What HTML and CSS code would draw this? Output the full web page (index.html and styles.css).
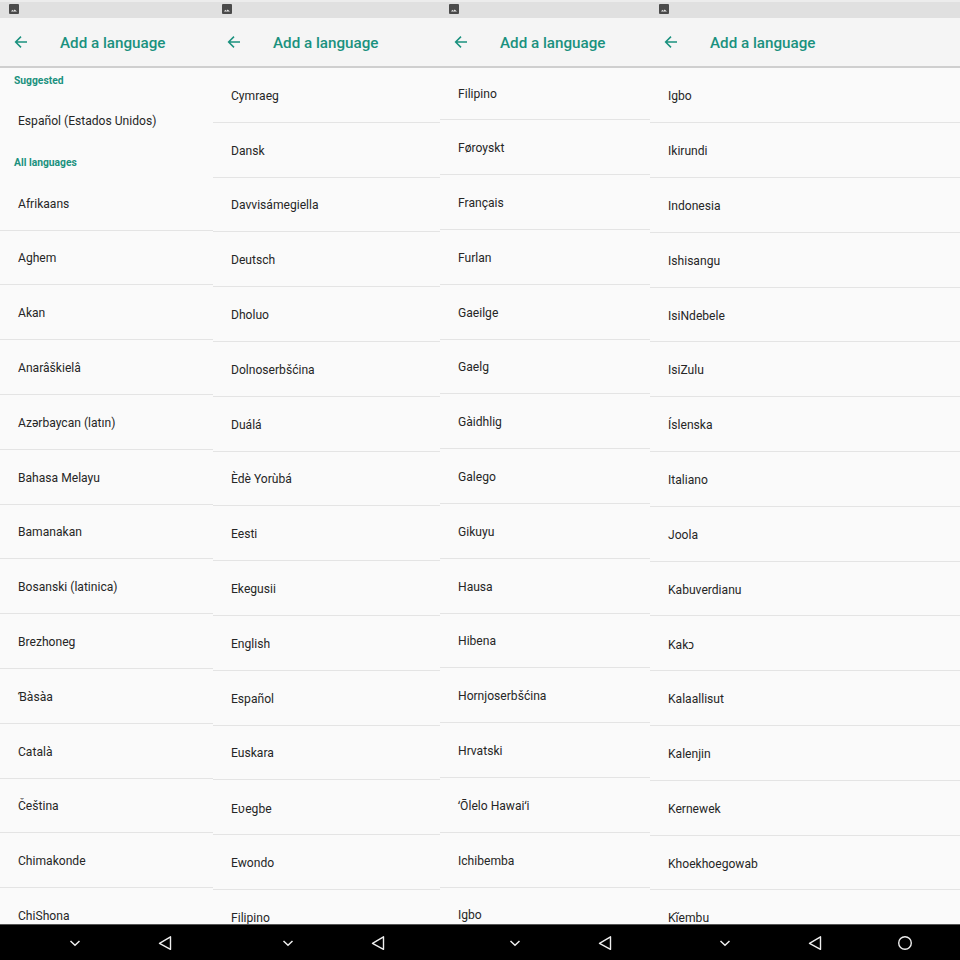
FILE: index.html
```html
<!DOCTYPE html>
<html lang="en">
<head>
<meta charset="utf-8">
<title>Add a language</title>
<link rel="stylesheet" href="styles.css">
</head>
<body>
<svg class="defs" width="0" height="0" aria-hidden="true">
  <symbol id="back" viewBox="0 0 14 14"><path d="M13 7H1.800M7 1.600 1.600 7 7 12.400" fill="none" stroke="currentColor" stroke-width="1.500"/></symbol>
  <symbol id="pic" viewBox="0 0 10 10"><rect width="10" height="10" rx="1" fill="#4a4a4a"/><path d="M2 7.600 3.400 5.800 4.400 7 5.600 5.600 8 7.600Z" fill="#e8e8e8"/></symbol>
  <symbol id="chev" viewBox="0 0 18 18"><path d="M4.500 7 9 11.200 13.500 7" fill="none" stroke="#eee" stroke-width="1.500"/></symbol>
  <symbol id="tri" viewBox="0 0 18 18"><path d="M14.500 3 3.500 9.500 14.500 15.500Z" transform="translate(0 -.2)" fill="none" stroke="#eee" stroke-width="1.400" stroke-linejoin="round"/></symbol>
  <symbol id="circ" viewBox="0 0 18 18"><circle cx="9" cy="9" r="6.300" fill="none" stroke="#eee" stroke-width="1.400"/></symbol>
</svg>
<main class="screens">
  <section class="panel panel-a">
    <div class="status"><svg class="pic"><use href="#pic"/></svg></div>
    <header class="appbar"><svg class="back"><use href="#back"/></svg><h1 class="title">Add a language</h1></header>
    <div class="list">
      <div class="label label-first">Suggested</div>
      <div class="row row-plain">Español (Estados Unidos)</div>
      <div class="label label-second">All languages</div>
      <div class="row">Afrikaans</div>
      <div class="row">Aghem</div>
      <div class="row">Akan</div>
      <div class="row">Anarâškielâ</div>
      <div class="row">Azərbaycan (latın)</div>
      <div class="row">Bahasa Melayu</div>
      <div class="row">Bamanakan</div>
      <div class="row">Bosanski (latinica)</div>
      <div class="row">Brezhoneg</div>
      <div class="row">Ɓàsàa</div>
      <div class="row">Català</div>
      <div class="row">Čeština</div>
      <div class="row">Chimakonde</div>
      <div class="row">ChiShona</div>
    </div>
    <nav class="nav"><svg class="navicon"><use href="#chev"/></svg><svg class="navicon"><use href="#tri"/></svg></nav>
  </section>
  <section class="panel panel-b">
    <div class="status"><svg class="pic"><use href="#pic"/></svg></div>
    <header class="appbar"><svg class="back"><use href="#back"/></svg><h1 class="title">Add a language</h1></header>
    <div class="list">
      <div class="row">Cymraeg</div>
      <div class="row">Dansk</div>
      <div class="row">Davvisámegiella</div>
      <div class="row">Deutsch</div>
      <div class="row">Dholuo</div>
      <div class="row">Dolnoserbšćina</div>
      <div class="row">Duálá</div>
      <div class="row">Èdè Yorùbá</div>
      <div class="row">Eesti</div>
      <div class="row">Ekegusii</div>
      <div class="row">English</div>
      <div class="row">Español</div>
      <div class="row">Euskara</div>
      <div class="row">Eʋegbe</div>
      <div class="row">Ewondo</div>
      <div class="row">Filipino</div>
    </div>
    <nav class="nav"><svg class="navicon"><use href="#chev"/></svg><svg class="navicon"><use href="#tri"/></svg></nav>
  </section>
  <section class="panel panel-c">
    <div class="status"><svg class="pic"><use href="#pic"/></svg></div>
    <header class="appbar"><svg class="back"><use href="#back"/></svg><h1 class="title">Add a language</h1></header>
    <div class="list">
      <div class="row">Filipino</div>
      <div class="row">Føroyskt</div>
      <div class="row">Français</div>
      <div class="row">Furlan</div>
      <div class="row">Gaeilge</div>
      <div class="row">Gaelg</div>
      <div class="row">Gàidhlig</div>
      <div class="row">Galego</div>
      <div class="row">Gikuyu</div>
      <div class="row">Hausa</div>
      <div class="row">Hibena</div>
      <div class="row">Hornjoserbšćina</div>
      <div class="row">Hrvatski</div>
      <div class="row">ʻŌlelo Hawaiʻi</div>
      <div class="row">Ichibemba</div>
      <div class="row">Igbo</div>
    </div>
    <nav class="nav"><svg class="navicon"><use href="#chev"/></svg><svg class="navicon"><use href="#tri"/></svg></nav>
  </section>
  <section class="panel panel-d">
    <div class="status"><svg class="pic"><use href="#pic"/></svg></div>
    <header class="appbar"><svg class="back"><use href="#back"/></svg><h1 class="title">Add a language</h1></header>
    <div class="list">
      <div class="row">Igbo</div>
      <div class="row">Ikirundi</div>
      <div class="row">Indonesia</div>
      <div class="row">Ishisangu</div>
      <div class="row">IsiNdebele</div>
      <div class="row">IsiZulu</div>
      <div class="row">Íslenska</div>
      <div class="row">Italiano</div>
      <div class="row">Joola</div>
      <div class="row">Kabuverdianu</div>
      <div class="row">Kakɔ</div>
      <div class="row">Kalaallisut</div>
      <div class="row">Kalenjin</div>
      <div class="row">Kernewek</div>
      <div class="row">Khoekhoegowab</div>
      <div class="row">Kĩembu</div>
    </div>
    <nav class="nav"><svg class="navicon"><use href="#chev"/></svg><svg class="navicon"><use href="#tri"/></svg><svg class="navicon"><use href="#circ"/></svg></nav>
  </section>
</main>
</body>
</html>
```
FILE: styles.css
```css
* { box-sizing: border-box; }
html, body { margin: 0; height: 960px; overflow: hidden; background: #fafafa; }
.defs { display: block; height: 0; }
.screens {
  display: grid;
  grid-template-columns: 213px 227px 210px 310px;
  width: 960px;
  height: 960px;
  font-family: Roboto, "Noto Sans", "DejaVu Sans", sans-serif;
}
.panel {
  display: flex;
  flex-direction: column;
  height: 960px;
  min-width: 0;
  overflow: hidden;
  background: #fafafa;
}
.status {
  flex: 0 0 18px;
  display: flex;
  align-items: center;
  padding: 0 0 2px 9px;
  background: #e0e0e0;
  border-top: 2px solid #ececec;
}
.pic { width: 10px; height: 10px; }
.appbar {
  position: relative;
  z-index: 1;
  flex: 0 0 50px;
  display: flex;
  align-items: center;
  gap: 32px;
  padding: 1px 0 0 14px;
  background: #f5f5f5;
  border-bottom: 2px solid #cfcfcf;
  color: #1a917e;
}
.back { flex: none; width: 14px; height: 14px; margin-top: -2px; }
.title {
  margin: 0;
  font-size: 15.2px;
  line-height: 20px;
  font-weight: 500;
  white-space: nowrap;
}
.list {
  flex: 1 1 0;
  min-height: 0;
  overflow: hidden;
}
.panel-c .row:first-child { margin-top: -2.4px; }
.panel-d .row:first-child { margin-top: 0.5px; }
.row {
  display: flex;
  align-items: center;
  height: 54.8px;
  padding: 2px 0 0 18px;
  border-bottom: 1px solid #e4e4e4;
  font-size: 12.1px;
  color: #262626;
  white-space: nowrap;
}
.row-plain { border-bottom: 0; }
.label {
  display: flex;
  align-items: center;
  padding-left: 14px;
  font-size: 10.3px;
  font-weight: 700;
  color: #1a917e;
}
.label-first { height: 25px; }
.label-second { height: 28px; padding-top: 1px; }
.nav {
  flex: 0 0 36px;
  display: flex;
  align-items: center;
  gap: 72px;
  padding-left: 66px;
  background: #000;
  border-top: 1px solid #555;
}
.navicon { flex: none; width: 18px; height: 18px; }
```
